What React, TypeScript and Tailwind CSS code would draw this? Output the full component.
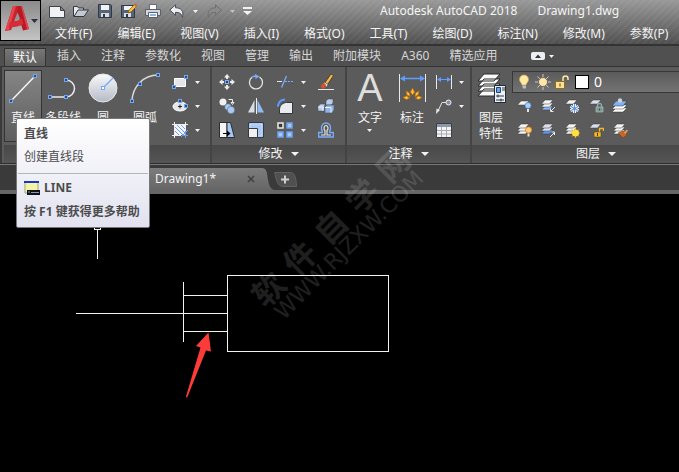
import type { ReactNode } from "react";

const menus = ["文件(F)", "编辑(E)", "视图(V)", "插入(I)", "格式(O)", "工具(T)", "绘图(D)", "标注(N)", "修改(M)", "参数(P)"];
const ribbonTabs = ["插入", "注释", "参数化", "视图", "管理", "输出", "附加模块", "A360", "精选应用"];

const Grip = ({ x, y }: { x: number; y: number }) => (
  <rect x={x - 1.5} y={y - 1.5} width="3" height="3" fill="#3b4a63" stroke="#6fa8ff" strokeWidth="1" shapeRendering="crispEdges" />
);

const Icon = ({ size = 16, children }: { size?: number; children: ReactNode }) => (
  <svg width={size} height={size} viewBox={`0 0 ${size} ${size}`} fill="none" aria-hidden="true" className="shrink-0">
    {children}
  </svg>
);

const Arrow = () => (
  <svg width="5" height="3" viewBox="0 0 5 3" aria-hidden="true" className="shrink-0">
    <path d="M0 0h5L2.5 3z" fill="#f2f2f2" />
  </svg>
);

// one sheet of the layer stack
const Sheet = ({ y, fill = "#f4f4f4" }: { y: number; fill?: string }) => (
  <path d={`M5 ${y}h8l-3.5 4h-8z`} fill={fill} stroke="#3a3a3a" strokeWidth=".5" />
);

const Stack = ({ last }: { last?: string }) => (
  <>
    <Sheet y={8} fill={last} />
    <Sheet y={5} />
    <Sheet y={2} />
  </>
);

const quickIcons: { name: string; icon: ReactNode }[] = [
  {
    name: "新建",
    icon: <path d="M.5 3.500h11l4 4v7H.5z M11.500 3.500v4h4" fill="#f0f1f4" stroke="#3d4148" />,
  },
  {
    name: "打开",
    icon: (
      <>
        <path d="M.5 13.500v-10h4l1 1.500h5v2" fill="#e8eaee" stroke="#33373e" />
        <path d="M1 13.500l4-6.500h10.500l-4.500 6.500z" fill="#c3c9d2" stroke="#33373e" />
      </>
    ),
  },
  {
    name: "保存",
    icon: (
      <>
        <path d="M1.500 1.500h12l1 1v12h-13z" fill="#566275" stroke="#303846" />
        <path d="M4 2h8v5H4z" fill="#f0f2f5" />
        <path d="M4 10h8v4H4z" fill="#d8dde4" />
        <path d="M6 11h2v3H6z" fill="#303846" />
      </>
    ),
  },
  {
    name: "另存为",
    icon: (
      <>
        <path d="M.5 2.500h12l1 1v11H.5z" fill="#566275" stroke="#303846" />
        <path d="M3 3h8v4H3z" fill="#f0f2f5" />
        <path d="M3 10h7v4H3z" fill="#d8dde4" />
        <path d="M5 11h2v3H5z" fill="#303846" />
        <path d="M7 10l1-3 5.500-5.500 2 2L10 9z" fill="#f5bd3c" stroke="#6d4a12" strokeWidth=".6" />
        <path d="M13 2l1.500-1.500 2 2L15 4z" fill="#d9603c" />
      </>
    ),
  },
  {
    name: "打印",
    icon: (
      <>
        <path d="M4.500 7V1.500h7V7" fill="#fff" stroke="#666c76" />
        <path d="M.5 6.500h15v6H.5z" fill="#d3d7de" stroke="#5b616c" />
        <path d="M3.500 9.500h9v5h-9z" fill="#fff" stroke="#5b616c" />
        <path d="M5 12h6" stroke="#8ab6e8" strokeWidth="2" />
      </>
    ),
  },
  {
    name: "放弃",
    icon: <path d="M.8 7L6.500 1.800v3C12 4.800 15 8 13.500 14.500 12.500 10.500 10.500 9.300 6.500 9.300v3z" fill="#eceef2" stroke="#4a4f58" />,
  },
];

const modifyIcons: Record<string, ReactNode> = {
  移动: (
    <>
      <path d="M8 0l3 3.500H9V5H7V3.500H5zM8 16l3-3.500H9V11H7v1.500H5zM0 8l3.500-3v2H5v2H3.500v2zM16 8l-3.500-3v2H11v2h1.500v2z" fill="#ececec" />
      <path d="M6.500 6.500h3v3h-3z" fill="#34435c" stroke="#78adff" shapeRendering="crispEdges" />
    </>
  ),
  旋转: (
    <>
      <path d="M11.500 3A6.500 6.500 0 1 1 4 3.300" stroke="#e3e3e3" strokeWidth="1.300" />
      <path d="M4 3.300A6.500 6.500 0 0 1 8 2" stroke="#78adff" strokeWidth="1.300" />
      <path d="M7 0l4.500 2.500L7.500 5z" fill="#78adff" />
    </>
  ),
  修剪: (
    <>
      <path d="M0 7.500h5" stroke="#e6e6e6" />
      <path d="M4.500 13.500L9.500 2" stroke="#78adff" strokeWidth="1.300" />
      <path d="M8 7.500h2M11 7.500h2M14 7.500h2" stroke="#78adff" />
    </>
  ),
  删除: (
    <>
      <path d="M0 15.500h16" stroke="#e6e6e6" />
      <path d="M7 8.500L13 0l2.500 1.500-6 9z" fill="#eeb751" stroke="#3c2a10" strokeWidth=".7" />
      <path d="M6.500 8l3.500 2.500-1.500 2.500-3.500-2.500z" fill="#e8e8e8" stroke="#463730" strokeWidth=".5" />
      <ellipse cx="5.500" cy="12" rx="2.800" ry="2.300" fill="#d0542c" transform="rotate(-40 5.500 12)" />
    </>
  ),
  复制: (
    <>
      <circle cx="4" cy="4" r="3.500" fill="#f2f2f2" />
      <circle cx="9" cy="9" r="3.300" fill="#a9c8f2" stroke="#4f5a6a" strokeWidth=".5" />
      <circle cx="12" cy="12" r="3.700" fill="#a9c8f2" stroke="#4f5a6a" strokeWidth=".5" />
      <path d="M9.500 1.500h4V5M12 4.500h3l-1.500 2z" stroke="#eee" />
    </>
  ),
  镜像: (
    <>
      <path d="M6.500 2v12.500H0z" fill="#d9dde4" />
      <path d="M9.500 2v12.500H16z" fill="#92baf1" />
      <path d="M8 0v16" stroke="#eee" shapeRendering="crispEdges" />
    </>
  ),
  圆角: (
    <>
      <path d="M2.500 15.500v-4c0-4 3.500-7 7-7h6v11z" fill="#e9ebef" stroke="#32363d" />
      <path d="M.8 8.500C1.500 4 4 1.500 8 1.500" stroke="#5d9bfb" strokeWidth="2" />
    </>
  ),
  分解: (
    <>
      <path d="M0 9l2-3h5l-1 7H0zM8 3l2-2h5v4l-2 2H8z" fill="#b9cde9" stroke="#4a5361" strokeWidth=".6" />
      <path d="M7 9l2-2h7v5l-2 3H7z" fill="#91b5e6" stroke="#4a5361" strokeWidth=".6" />
      <path d="M0 9h5v4M7 9.500h6v5" stroke="#edf3fb" />
    </>
  ),
  拉伸: (
    <>
      <path d="M.5.500H8v15H.5z" fill="#f4f4f4" stroke="#2d2d2d" />
      <path d="M8 .5h3.500l4 15H8z" fill="#a4c7f5" stroke="#2d2d2d" />
      <path d="M4 11.500h5" stroke="#000" />
      <path d="M8 8.500l3.500 3L8 14.500z" fill="#000" />
    </>
  ),
  缩放: (
    <>
      <path d="M.5.500h15v15H.5z" fill="#8fb7ee" stroke="#363a42" />
      <path d="M2 2h12v12H2z" fill="#a9c8f2" stroke="#d6e5fb" strokeWidth=".8" />
      <path d="M.5 6.500h9v9h-9z" fill="#f0f0f0" stroke="#363a42" />
    </>
  ),
  阵列: (
    <>
      <path d="M1 1h5v5H1z" fill="#383838" stroke="#ececec" strokeWidth="1.500" />
      <path d="M10 1h5v5h-5zM1 10h5v5H1zM10 10h5v5h-5z" fill="#a7c7f5" stroke="#6ba2f4" strokeWidth="1.500" />
    </>
  ),
  偏移: (
    <>
      <path d="M.7 15v-4.500h3.600V9A4.500 4.500 0 0 1 3.500 5.500a4.500 4.500 0 0 1 9 0A4.500 4.500 0 0 1 11.700 9v1.500h3.600V15z" stroke="#78adff" strokeWidth="1.300" />
      <path d="M3 13h4V8.500C5.500 7.500 5.500 3.500 8 3.500s2.500 4 1 5V13h4" stroke="#ececec" strokeWidth="1.100" />
    </>
  ),
};

const modifyRows: string[][] = [
  ["移动", "旋转", "修剪", "删除"],
  ["复制", "镜像", "圆角", "分解"],
  ["拉伸", "缩放", "阵列", "偏移"],
];

const layerIcons: { name: string; icon: ReactNode }[] = [
  {
    name: "关闭图层",
    icon: (
      <>
        <Sheet y={3} />
        <circle cx="12" cy="7.500" r="3" fill="#a9d0fb" stroke="#4e80c0" strokeWidth=".7" />
        <path d="M11 11h2v3h-2z" fill="#e4e4e4" />
      </>
    ),
  },
  {
    name: "隔离",
    icon: (
      <>
        <Stack last="#86b5f5" />
        <path d="M15 9l-4 4M10.500 10.500v3h3" stroke="#e8e8e8" />
      </>
    ),
  },
  {
    name: "冻结",
    icon: (
      <>
        <Sheet y={2} />
        <path d="M10.500 6v9M6.600 8.200l7.800 4.600M6.600 12.800l7.800-4.600" stroke="#fff" strokeWidth="3" />
        <path d="M10.500 6v9M6.600 8.200l7.800 4.600M6.600 12.800l7.800-4.600" stroke="#5e93da" strokeWidth="1.200" />
      </>
    ),
  },
  {
    name: "锁定",
    icon: (
      <>
        <Sheet y={2} fill="#d8dfec" />
        <path d="M9.500 9V7.500a2 2 0 0 1 4 0V9" stroke="#91aaa5" strokeWidth="1.300" />
        <path d="M8 9h7v5H8z" fill="#7d9893" stroke="#b8cbc6" strokeWidth=".6" />
        <path d="M11.500 10.500v2" stroke="#3d504c" />
      </>
    ),
  },
  {
    name: "置为当前",
    icon: (
      <>
        <path d="M4 10h11l-4 4H0z" fill="#fff" stroke="#333" strokeWidth=".5" />
        <path d="M4 7h11l-4 4H0z" fill="#fff" stroke="#333" strokeWidth=".5" />
        <path d="M4 3h11l-4 5H0z" fill="#82b1f3" stroke="#333" strokeWidth=".5" />
        <circle cx="8" cy="2.500" r="2.200" fill="#cfd3da" />
      </>
    ),
  },
  {
    name: "打开所有图层",
    icon: (
      <>
        <Stack />
        <circle cx="12.500" cy="8" r="3" fill="#ffd17a" stroke="#f08a1c" />
        <path d="M11.500 11.500h2v3h-2z" fill="#e4e4e4" />
      </>
    ),
  },
  {
    name: "取消隔离",
    icon: (
      <>
        <Sheet y={8} fill="#5c98f3" />
        <Sheet y={5} fill="#dcdfe8" />
        <Sheet y={2} fill="#dcdfe8" />
        <path d="M10 15l4.500-4.500M11.500 10h3v3" stroke="#f0f0f0" />
      </>
    ),
  },
  {
    name: "解冻所有图层",
    icon: (
      <>
        <Stack />
        <path d="M11.500 6v10M6.500 11h10M8 7.500l7 7M15 7.500l-7 7" stroke="#f1a81d" />
        <circle cx="11.500" cy="11" r="3.500" fill="#ffe03c" />
      </>
    ),
  },
  {
    name: "解锁",
    icon: (
      <>
        <Sheet y={2} fill="#d8dfec" />
        <path d="M11.500 10V6.500h4V9" stroke="#f6b820" strokeWidth="1.300" />
        <path d="M6 10h7v5H6z" fill="#f6b820" stroke="#4a3c18" strokeWidth=".5" />
        <path d="M9.500 11v3" stroke="#4a3c18" />
      </>
    ),
  },
  {
    name: "图层匹配",
    icon: (
      <>
        <Stack />
        <path d="M6 11l5-2 4 4-4 3z" fill="#c8662a" stroke="#7d3a12" strokeWidth=".6" />
        <path d="M11.500 10.500L15 7.500l1 1-2.500 3.500" fill="#e99b56" />
      </>
    ),
  },
];

function Panel({ title, width, children }: { title: string; width: string; children: ReactNode }) {
  return (
    <section aria-label={title} className={`flex shrink-0 flex-col border-r-2 border-[#444] ${width}`}>
      <div className="flex h-[78px] items-center">{children}</div>
      <button type="button" className="flex h-[18px] items-center justify-center gap-2 bg-linear-to-b from-[#484848] to-[#555]">
        {title}
        <svg width="8" height="4" viewBox="0 0 8 4" aria-hidden="true">
          <path d="M0 0h8L4 4z" fill="#f2f2f2" />
        </svg>
      </button>
    </section>
  );
}

function BigButton({ width, active, icon, children }: { width: string; active?: boolean; icon: ReactNode; children: ReactNode }) {
  return (
    <button
      type="button"
      className={`flex h-[72px] shrink-0 flex-col items-center gap-1.5 border pt-px leading-4 whitespace-nowrap ${width} ${
        active ? "border-[#333] bg-linear-to-b from-[#858585] to-[#5e5e5e]" : "border-transparent"
      }`}
    >
      {icon}
      <span>{children}</span>
    </button>
  );
}

function SmallButton({ name, children }: { name: string; children: ReactNode }) {
  return (
    <button type="button" aria-label={name} className="flex h-6 w-6 items-center justify-center">
      {children}
    </button>
  );
}

function TitleBar() {
  return (
    <header className="flex h-[46px] overflow-hidden border-b-2 border-[#333] bg-[repeating-linear-gradient(135deg,#ffffff0a_0_2px,transparent_2px_5px),linear-gradient(#999,#505050)]">
      <button
        type="button"
        aria-label="应用程序菜单"
        className="flex h-[41px] w-[41px] shrink-0 items-center gap-0.5 border border-black bg-linear-to-b from-[#8a8a8a] to-[#c4c4c4] pl-1"
      >
        <svg width="24" height="34" viewBox="0 0 24 34" aria-hidden="true" className="shrink-0">
          <path d="M8 2h8L6 26l-6 1z" fill="#c9222c" />
          <path d="M8 2h3L4 26l-4 1z" fill="#e2454d" />
          <path d="M13 2h4l7 23-6 1.500-6-19z" fill="#b81a24" />
          <path d="M16 2h1l7 23-2 .5z" fill="#e2454d" />
          <path d="M5 18c5-.5 9-1.500 12-3.500l1.500 5.500C13 23 8 23.500 3.500 23z" fill="#d42d37" />
          <path d="M9 17l3.500-8.500 2.500 6z" fill="#959595" />
        </svg>
        <svg width="7" height="4" viewBox="0 0 7 4" aria-hidden="true" className="shrink-0">
          <path d="M0 0h7L3.500 4z" fill="#2b3340" />
        </svg>
      </button>
      <div className="flex min-w-0 flex-col">
        <div className="flex h-[22px] shrink-0 items-center pl-2">
          <div className="flex items-center gap-2">
            {quickIcons.map((q) => (
              <button key={q.name} type="button" aria-label={q.name}>
                <Icon>{q.icon}</Icon>
              </button>
            ))}
            <Arrow />
            <button type="button" aria-label="重做">
              <Icon>
                <path d="M15.200 7L9.500 1.800v3C4 4.800 1 8 2.500 14.500 3.500 10.500 5.500 9.300 9.500 9.300v3z" fill="#8b8b8b" stroke="#6f6f6f" />
              </Icon>
            </button>
            <svg width="5" height="3" viewBox="0 0 5 3" aria-hidden="true">
              <path d="M0 0h5L2.500 3z" fill="#c2c2c2" />
            </svg>
            <button type="button" aria-label="自定义快速访问工具栏">
              <svg width="9" height="8" viewBox="0 0 9 8" aria-hidden="true">
                <path d="M0 0h9v2H0zM0 4h9L4.500 8z" fill="#f2f2f2" />
              </svg>
            </button>
          </div>
          <h1 className="ml-32 flex gap-5 whitespace-nowrap">
            <span>Autodesk AutoCAD 2018</span>
            <span>Drawing1.dwg</span>
          </h1>
        </div>
        <nav className="flex h-6 shrink-0 items-center gap-[25px] pl-[14px]">
          {menus.map((m) => (
            <button key={m} type="button" className="whitespace-nowrap">
              {m}
            </button>
          ))}
        </nav>
      </div>
    </header>
  );
}

function RibbonTabs() {
  return (
    <nav className="flex h-5 items-stretch overflow-hidden bg-[#505050] pl-1 text-[#d6d6d6]">
      <button type="button" className="mt-0.5 mr-px border border-b-0 border-[#333] bg-linear-to-b from-[#777] to-[#5d5d5d] px-2 leading-4 text-white">
        默认
      </button>
      {ribbonTabs.map((t) => (
        <button key={t} type="button" className="px-2.5 whitespace-nowrap">
          {t}
        </button>
      ))}
      <button type="button" aria-label="最小化功能区" className="ml-6 flex items-center gap-1">
        <svg width="14" height="8" viewBox="0 0 14 8" aria-hidden="true">
          <rect width="14" height="8" rx="2" fill="#eceef2" />
          <path d="M4 6h6L7 2.500z" fill="#333" />
        </svg>
        <Arrow />
      </button>
    </nav>
  );
}

function DrawPanel() {
  return (
    <Panel title="绘图" width="w-[208px]">
      <BigButton
        width="w-[38px]"
        active
        icon={
          <Icon size={32}>
            <path d="M4 29L28 4" stroke="#f4f4f4" strokeWidth="1.500" />
            <Grip x={4} y={29} />
            <Grip x={28} y={4} />
          </Icon>
        }
      >
        直线
      </BigButton>
      <BigButton
        width="w-[42px]"
        icon={
          <Icon size={32}>
            <path d="M3 25h16a8.500 8.500 0 0 0 0-17" stroke="#ececec" strokeWidth="1.500" />
            <Grip x={3} y={25} />
            <Grip x={19} y={25} />
            <Grip x={19} y={8} />
          </Icon>
        }
      >
        多段线
      </BigButton>
      <BigButton
        width="w-[38px]"
        icon={
          <Icon size={32}>
            <defs>
              <linearGradient id="disc" x1="0" y1="0" x2="0" y2="1">
                <stop offset="0" stopColor="#fafafa" />
                <stop offset="1" stopColor="#b4bac6" />
              </linearGradient>
            </defs>
            <circle cx="16" cy="16" r="14" fill="url(#disc)" stroke="#e8e8e8" />
            <path d="M16 16L26 6" stroke="#6fa8ff" strokeWidth="1.300" />
            <rect x="14.500" y="14.500" width="3" height="3" fill="#fff" stroke="#6fa8ff" shapeRendering="crispEdges" />
          </Icon>
        }
      >
        圆
      </BigButton>
      <BigButton
        width="w-[46px]"
        icon={
          <Icon size={32}>
            <path d="M3 29C3.500 15 14 3 29 3" stroke="#d8d8d8" strokeWidth="1.500" />
            <Grip x={3} y={29} />
            <Grip x={11} y={12} />
            <Grip x={29} y={3} />
          </Icon>
        }
      >
        圆弧
      </BigButton>
      <div className="grid grid-cols-[24px_10px] items-center justify-items-center">
        <SmallButton name="矩形">
          <Icon>
            <path d="M2.500 4.500h11v8h-11z" fill="#e4e6ea" stroke="#fff" />
            <Grip x={2} y={13} />
            <Grip x={14} y={3} />
          </Icon>
        </SmallButton>
        <Arrow />
        <SmallButton name="椭圆">
          <Icon>
            <ellipse cx="8" cy="8.500" rx="7" ry="4.500" fill="#e4e6ea" stroke="#fff" />
            <path d="M6 8.500h4M8 6.500v4" stroke="#222" />
            <Grip x={8} y={3} />
            <Grip x={14} y={8} />
          </Icon>
        </SmallButton>
        <Arrow />
        <SmallButton name="图案填充">
          <Icon>
            <path d="M3 3h10v10H3z" fill="#f2f5fb" />
            <path d="M3 5l8 8M3 9l4 4M5 3l8 8M9 3l4 4" stroke="#6c9ff0" />
            <path d="M0 2.500h16M2.500 0v16M0 13.500h9M13.500 0v9" stroke="#eee" shapeRendering="crispEdges" />
            <path d="M9 15l7-7M13.500 9v7M10 13.500h6" stroke="#6c9ff0" />
          </Icon>
        </SmallButton>
        <Arrow />
      </div>
    </Panel>
  );
}

function ModifyPanel() {
  return (
    <Panel title="修改" width="w-[135px]">
      <div className="grid grid-cols-[30px_28px_30px_6px_40px] items-center justify-items-center">
        {modifyRows.map(([a, b, c, d]) => [
          <SmallButton key={a} name={a}><Icon>{modifyIcons[a]}</Icon></SmallButton>,
          <SmallButton key={b} name={b}><Icon>{modifyIcons[b]}</Icon></SmallButton>,
          <SmallButton key={c} name={c}><Icon>{modifyIcons[c]}</Icon></SmallButton>,
          <Arrow key={c + "-more"} />,
          <SmallButton key={d} name={d}><Icon>{modifyIcons[d]}</Icon></SmallButton>,
        ])}
      </div>
    </Panel>
  );
}

function AnnotatePanel() {
  return (
    <Panel title="注释" width="w-[125px]">
      <BigButton
        width="w-[46px]"
        icon={<span className="h-8 font-['Liberation_Sans'] text-[38px] leading-8 text-[#dedede]">A</span>}
      >
        文字
        <span className="flex h-1.5 items-end justify-center"><Arrow /></span>
      </BigButton>
      <BigButton
        width="w-[38px]"
        icon={
          <Icon size={32}>
            <path d="M3.500 2v28M29.500 2v28" stroke="#eaeaea" shapeRendering="crispEdges" />
            <path d="M5 6.500h23" stroke="#5c9dff" strokeWidth="1.500" />
            <path d="M4 6.500l5-3v6zM29 6.500l-5-3v6z" fill="#5c9dff" />
            <path d="M16.500 16l2 4-2 3-2-3zM10 19l3.500 2 .5 3.500-3-1.500zM23 19l-3.500 2-.5 3.500 3-1.500zM7 25.500l3.500-1.500 3 2-3 1.500zM26 25.500l-3.500-1.500-3 2 3 1.500z" fill="#ffc72e" stroke="#c8690f" strokeWidth=".8" />
          </Icon>
        }
      >
        标注
      </BigButton>
      <div className="grid grid-cols-[26px_8px] items-center justify-items-center">
        <SmallButton name="线性">
          <Icon>
            <path d="M.5 1v14M15.500 1v14" stroke="#e8e8e8" shapeRendering="crispEdges" />
            <path d="M2 5.500h12" stroke="#5c9dff" />
            <path d="M1 5.500l4-2.500v5zM15 5.500L11 3v5z" fill="#5c9dff" />
          </Icon>
        </SmallButton>
        <Arrow />
        <SmallButton name="引线">
          <Icon>
            <path d="M1.500 14L6 4.500h4" stroke="#e4e4e4" />
            <path d="M0 16l.5-5.500L4 12z" fill="#e4e4e4" />
            <circle cx="12.500" cy="4.500" r="2.500" fill="#7f8ea5" stroke="#f0f0f0" />
          </Icon>
        </SmallButton>
        <Arrow />
        <SmallButton name="表格">
          <Icon>
            <path d="M.5 1.500h15v14H.5z" fill="#f4f4f4" stroke="#3a3f48" />
            <path d="M1 2h14v3H1z" fill="#8d98a8" />
            <path d="M1 8.500h14M1 12h14M5.500 5v10M10.500 5v10" stroke="#a7abb3" />
          </Icon>
        </SmallButton>
      </div>
    </Panel>
  );
}

function LayerPanel() {
  return (
    <Panel title="图层" width="w-[250px]">
      <BigButton
        width="w-[38px]"
        icon={
          <Icon size={32}>
            <path d="M9 17h16l-6 7H3z M9 12h16l-6 7H3z M9 7h16l-6 7H3z M9 2h16l-6 7H3z" fill="#fafafa" stroke="#2c2c2c" />
            <path d="M19.500 13.500h11v17h-11z" fill="#eef1f6" stroke="#1f2a3a" />
            <path d="M21.500 15.500h4v5h-4z" fill="#6ba4f5" stroke="#27446f" />
            <path d="M27 16h3M27 18h3M21 24h8M21 28h8M23 22.500v3M26 26.500v3" stroke="#2b3442" />
          </Icon>
        }
      >
        图层
        <br />
        特性
      </BigButton>
      <div className="ml-0.5 flex flex-1 flex-col">
        <div className="my-px flex h-[22px] items-center gap-[3px] border border-[#383838] bg-linear-to-b from-[#5b5b5b] to-[#737373] pl-[3px]">
          <Icon>
            <path d="M3.500 5.500a4.500 4.500 0 0 1 9 0c0 2.500-2 3-2.500 5.500H6C5.500 8.500 3.500 8 3.500 5.500z" fill="#ffe9a4" stroke="#d3ad55" strokeWidth=".7" />
            <path d="M6 11.500h4v3H7z" fill="#b9bcc4" />
          </Icon>
          <Icon>
            <path d="M8 0v16M0 8h16M2.500 2.500l11 11M13.500 2.500l-11 11" stroke="#c9c9c9" />
            <circle cx="8" cy="8" r="4.500" fill="#ffe6a8" stroke="#6f6a5f" />
          </Icon>
          <Icon>
            <path d="M9 8V4.500a2.500 2.500 0 0 1 5 0V6" stroke="#fde9a4" strokeWidth="1.500" />
            <path d="M1.500 7.500h9v7h-9z" fill="#fde08a" stroke="#8a6d28" />
            <path d="M6 9.500v3" stroke="#4a3c18" />
          </Icon>
          <span className="ml-0.5 h-3.5 w-3.5 shrink-0 border border-black bg-white" />
          <select aria-label="图层" defaultValue="0" className="flex-1 appearance-none bg-transparent pl-0.5 text-sm leading-5 text-white outline-none">
            <option value="0">0</option>
          </select>
        </div>
        <div className="grid w-[120px] grid-cols-5">
          {layerIcons.map((l) => (
            <SmallButton key={l.name} name={l.name}>
              <Icon>{l.icon}</Icon>
            </SmallButton>
          ))}
        </div>
      </div>
    </Panel>
  );
}

function LineTooltip() {
  return (
    <div
      role="tooltip"
      className="absolute top-[118px] left-4 z-20 w-[134px] rounded-xs border border-[#777] bg-linear-to-b from-white to-[#e2e2f0] text-[#4c4c4c]"
    >
      <p className="px-[7px] pt-[7px] leading-4 font-bold">直线</p>
      <p className="mt-[7px] px-[7px] leading-4">创建直线段</p>
      <div className="mx-px mt-2 border-t border-[#b4b4ba] px-1.5 pt-1.5 pb-[7px] font-bold">
        <p className="flex items-center gap-1 leading-4">
          <Icon>
            <path d="M1 2h13v11H1z" fill="#f5f3a6" stroke="#a5a56a" />
            <path d="M0 1h15v2H0z" fill="#1736c8" />
            <path d="M3 10h13v5H3z" fill="#10131c" />
            <path d="M4 12h2M7 12.500h8" stroke="#8f99b5" />
          </Icon>
          LINE
        </p>
        <p className="mt-2 leading-4 whitespace-nowrap">按 F1 键获得更多帮助</p>
      </div>
    </div>
  );
}

function DocumentTabs() {
  return (
    <div className="flex h-[30px] items-end border-t border-[#777] border-b-4 border-b-[#666] bg-[#3a3a3a]">
      <div className="ml-4 flex h-[22px] w-[246px] items-center rounded-tl-md bg-linear-to-b from-[#7c7c7c] to-[#666] pl-[139px]">
        <button type="button" className="leading-5">Drawing1*</button>
        <button type="button" aria-label="关闭" className="ml-auto mr-[7px]">
          <svg width="8" height="8" viewBox="0 0 8 8" aria-hidden="true">
            <path d="M1 1l6 6M7 1L1 7" stroke="#3f3f3f" strokeWidth="1.500" />
          </svg>
        </button>
      </div>
      <svg width="12" height="22" viewBox="0 0 12 22" aria-hidden="true">
        <defs>
          <linearGradient id="tabEdge" x1="0" y1="0" x2="0" y2="1">
            <stop offset="0" stopColor="#7c7c7c" />
            <stop offset="1" stopColor="#666" />
          </linearGradient>
        </defs>
        <path d="M0 0c5 0 5 5 6 12 1 6 3 9 6 10H0z" fill="url(#tabEdge)" />
      </svg>
      <button type="button" aria-label="新图形" className="mb-[3px]">
        <svg width="23" height="15" viewBox="0 0 23 15" aria-hidden="true">
          <path d="M.5.500H16c4 0 6 3 6.500 14H9C3 14.500 2 6 .5.500z" fill="#505050" stroke="#626262" />
          <path d="M7 7.500h8M11 3.500v8" stroke="#cfcfcf" strokeWidth="2" />
        </svg>
      </button>
    </div>
  );
}

function Canvas() {
  return (
    <main className="flex-1 overflow-hidden bg-black">
      <svg width="400" height="220" viewBox="0 0 400 220" fill="none" role="img" aria-label="Drawing1">
        <g stroke="#f2f2f2" shapeRendering="crispEdges">
          <path d="M94.500 32v3.500h6V32M97.500 36v29" />
          <path d="M76 119.500h151M183.500 88v60M183 101.500h44M183 137.500h44" />
          <path d="M227.500 81.500h161v76h-161z" />
        </g>
        <path d="M208.500 138.500L196 152l4.500 1.500-14.500 49 1 1.500 19-47.500 5 1z" fill="#fd3b38" />
      </svg>
    </main>
  );
}

function Watermark() {
  return (
    <div
      aria-hidden="true"
      className="pointer-events-none absolute top-[234px] left-[338px] z-10 flex -translate-x-1/2 -translate-y-1/2 -rotate-45 flex-col items-center text-white opacity-12"
    >
      <div className="flex gap-3 text-[32px] leading-8 font-bold">
        {["软", "件", "自", "学", "网"].map((ch) => (
          <span key={ch}>{ch}</span>
        ))}
      </div>
      <span className="font-['DejaVu_Sans'] text-[22px] leading-5">WWW.RJZXW.COM</span>
    </div>
  );
}

export default function App() {
  return (
    <div className="relative flex min-h-screen flex-col overflow-hidden bg-[#3a3a3a] font-['Noto_Sans','Noto_Sans_CJK_SC',sans-serif] text-xs text-[#f4f4f4]">
      <TitleBar />
      <RibbonTabs />
      <div className="flex overflow-hidden border-y border-l-2 border-t-[#333] border-b-[#2e2e2e] border-l-[#3a3a3a] bg-[#5b5b5b] pl-0.5">
        <DrawPanel />
        <ModifyPanel />
        <AnnotatePanel />
        <LayerPanel />
      </div>
      <DocumentTabs />
      <Canvas />
      <LineTooltip />
      <Watermark />
    </div>
  );
}
